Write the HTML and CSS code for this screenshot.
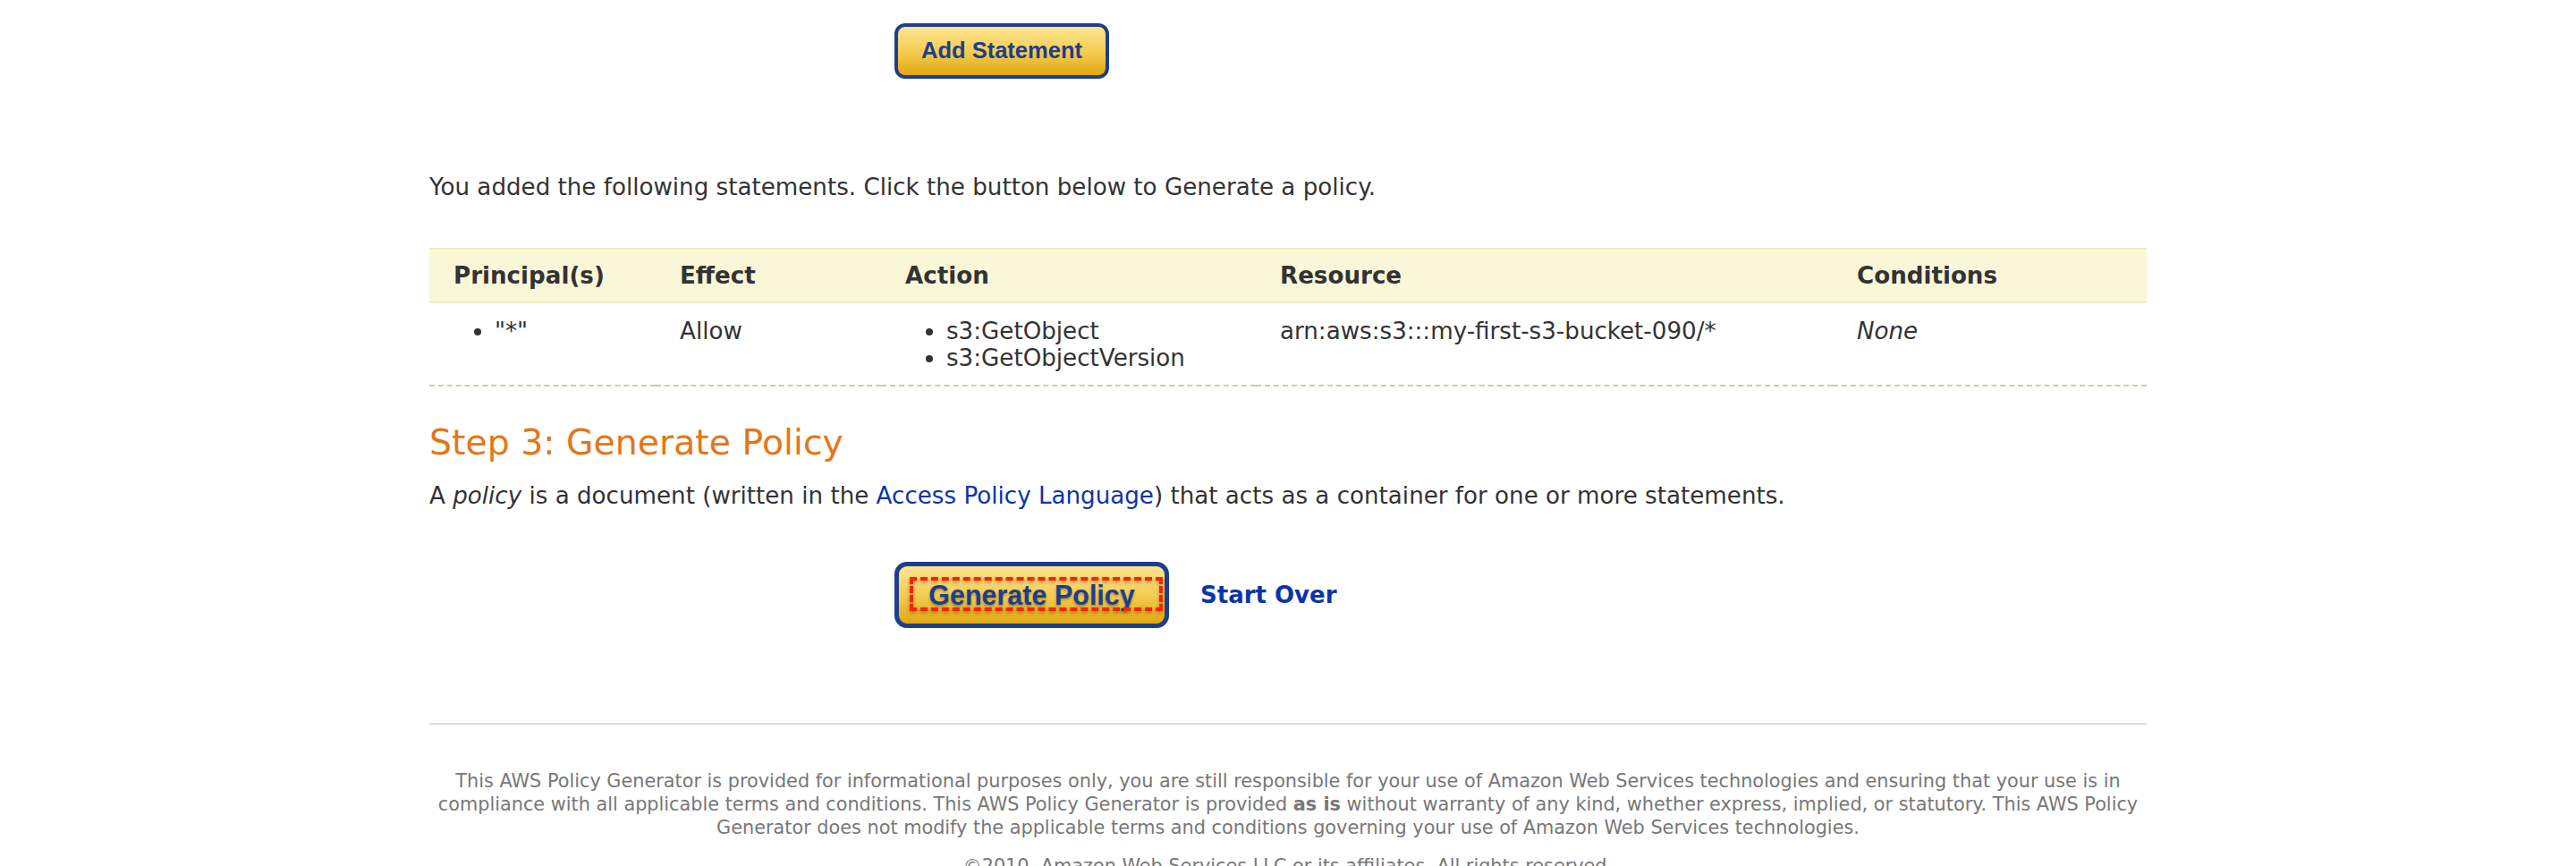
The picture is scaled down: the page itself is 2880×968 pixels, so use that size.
FILE: index.html
```html
<!DOCTYPE html>
<html lang="en">
<head>
<meta charset="utf-8">
<title>AWS Policy Generator</title>
<link rel="stylesheet" href="styles.css">
</head>
<body>
<div class="page">
  <div class="form-row add-row">
    <button class="btn" type="button">Add Statement</button>
  </div>

  <p class="intro">You added the following statements. Click the button below to Generate a policy.</p>

  <table class="statements">
    <colgroup>
      <col class="c-principal">
      <col class="c-effect">
      <col class="c-action">
      <col class="c-resource">
      <col class="c-conditions">
    </colgroup>
    <thead>
      <tr>
        <th>Principal(s)</th>
        <th>Effect</th>
        <th>Action</th>
        <th>Resource</th>
        <th>Conditions</th>
      </tr>
    </thead>
    <tbody>
      <tr>
        <td><ul class="cell-list"><li>"*"</li></ul></td>
        <td>Allow</td>
        <td><ul class="cell-list"><li>s3:GetObject</li><li>s3:GetObjectVersion</li></ul></td>
        <td>arn:aws:s3:::my-first-s3-bucket-090/*</td>
        <td><em>None</em></td>
      </tr>
    </tbody>
  </table>

  <h2 class="step">Step 3: Generate Policy</h2>
  <p class="desc">A <em>policy</em> is a document (written in the <a class="link" href="#">Access Policy Language</a>) that acts as a container for one or more statements.</p>

  <div class="form-row gen-row">
    <button class="btn btn-lg" type="button"><span class="btn-label">Generate Policy</span><span class="focus-ring"></span></button>
    <a class="start-over" href="#">Start Over</a>
  </div>

  <hr class="divider">

  <div class="footer">
    <p>This AWS Policy Generator is provided for informational purposes only, you are still responsible for your use of Amazon Web Services technologies and ensuring that your use is in compliance with all applicable terms and conditions. This AWS Policy Generator is provided <strong>as is</strong> without warranty of any kind, whether express, implied, or statutory. This AWS Policy Generator does not modify the applicable terms and conditions governing your use of Amazon Web Services technologies.</p>
    <p class="copy">&copy;2010, Amazon Web Services LLC or its affiliates. All rights reserved.</p>
  </div>
</div>
</body>
</html>
```

FILE: styles.css
```css
html, body {
  margin: 0;
  padding: 0;
  background: #ffffff;
}

body {
  font-family: "DejaVu Sans", Verdana, sans-serif;
  font-size: 26.15px;
  color: #333333;
}

.page {
  width: 1920px;
  margin: 0 auto;
  padding-top: 26px;
}

.form-row {
  display: flex;
  align-items: center;
  padding-left: 520px;
}

.btn {
  position: relative;
  box-sizing: border-box;
  width: 240px;
  height: 62px;
  padding: 0;
  border: 4px solid #1e3e8b;
  border-radius: 12px;
  background: linear-gradient(to bottom, #fde590 0%, #f5cd55 50%, #e1a80f 100%);
  color: #1e3e8b;
  font-family: "Liberation Sans", Arial, sans-serif;
  font-weight: bold;
  font-size: 25.5px;
  line-height: 1;
  cursor: pointer;
}

.btn-lg {
  width: 307px;
  height: 74px;
  border-width: 5px;
  border-radius: 14px;
  font-size: 30.5px;
}

.btn-label {
  text-shadow: 0 2px 3px rgba(0, 0, 0, 0.3);
}

.focus-ring {
  position: absolute;
  left: 12px;
  top: 12px;
  right: 2px;
  bottom: 14px;
  border: 4px dashed #ff2200;
  filter: drop-shadow(0 2px 2px rgba(0, 0, 0, 0.35));
}

.start-over {
  margin-left: 35px;
  color: #0a35a8;
  font-weight: bold;
  font-size: 26px;
  text-decoration: none;
}

.intro {
  margin: 106px 0 0;
  line-height: 30px;
}

.statements {
  margin-top: 53px;
  width: 1920px;
  table-layout: fixed;
  border-collapse: separate;
  border-spacing: 0;
}

.c-principal { width: 253px; }
.c-effect { width: 252px; }
.c-action { width: 419px; }
.c-resource { width: 645px; }
.c-conditions { width: 351px; }

.statements th {
  text-align: left;
  font-weight: bold;
  line-height: 30px;
  padding: 14px 10px 14px 27px;
  background: #faf7d8;
  border-top: 2px solid #efebc8;
  border-bottom: 2px solid #efebc8;
  color: #333333;
}

.statements td {
  vertical-align: top;
  line-height: 30px;
  padding: 16px 10px 15px 27px;
  border-bottom: 2px dashed #d2cd9c;
}

.cell-list {
  margin: 0;
  padding-left: 46px;
}

.step {
  margin: 40px 0 0;
  font-size: 39.4px;
  line-height: 45px;
  font-weight: normal;
  color: #e4761a;
}

.desc {
  margin: 22px 0 0;
  line-height: 30px;
}

.link {
  color: #0a35a8;
  text-decoration: none;
}

.gen-row {
  margin-top: 59px;
}

.divider {
  margin: 106px 0 0;
  height: 2px;
  border: 0;
  background: #dddddd;
}

.footer {
  margin-top: 50px;
  text-align: center;
  color: #777777;
  font-size: 20.8px;
  line-height: 26px;
}

.footer p {
  margin: 0;
}

.footer .copy {
  margin-top: 17px;
}
```
